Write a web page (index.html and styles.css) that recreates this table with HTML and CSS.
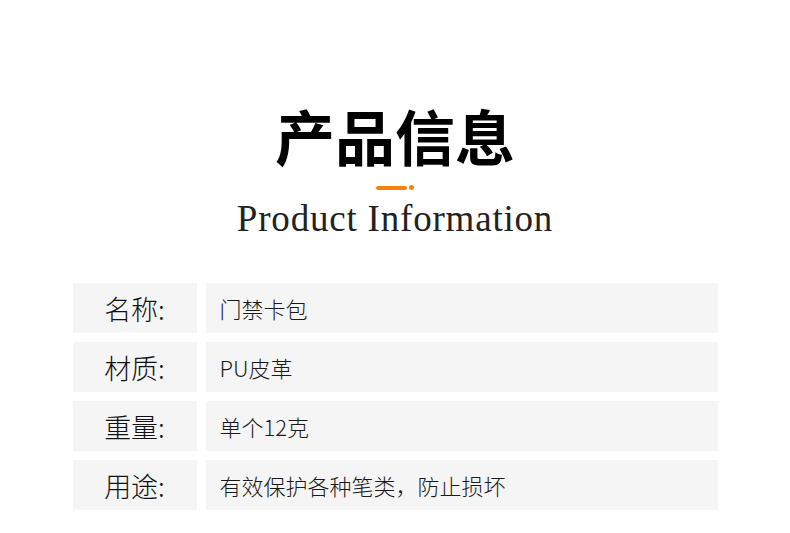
FILE: index.html
```html
<!DOCTYPE html>
<html lang="zh-CN">
<head>
    <meta charset="UTF-8">
    <meta name="viewport" content="width=device-width, initial-scale=1.0">
    <title>产品信息</title>
    <link rel="stylesheet" href="styles.css">
</head>
<body>
    <div class="header">
        <h1 class="title">产品信息</h1>
        <div class="accent">
            <span class="accent-line"></span>
            <span class="accent-dot"></span>
        </div>
        <p class="subtitle">Product Information</p>
    </div>

    <div class="info-table">
        <div class="info-row">
            <div class="info-label">名称:</div>
            <div class="info-value">门禁卡包</div>
        </div>
        <div class="info-row">
            <div class="info-label">材质:</div>
            <div class="info-value">PU皮革</div>
        </div>
        <div class="info-row">
            <div class="info-label">重量:</div>
            <div class="info-value">单个12克</div>
        </div>
        <div class="info-row">
            <div class="info-label">用途:</div>
            <div class="info-value">有效保护各种笔类，防止损坏</div>
        </div>
    </div>
</body>
</html>
```

FILE: styles.css
```css
* {
    padding: 0;
    margin: 0;
    box-sizing: border-box;
}
body {
    background-color: #fff;
    font-family: "Noto Sans CJK SC", "Noto Sans", sans-serif;
    color: #222;
}
.header {
    display: flex;
    flex-direction: column;
    align-items: center;
    padding-top: 105px;
}
.title {
    font-size: 60px;
    line-height: 60px;
    font-weight: 700;
    color: #000;
}
.accent {
    display: flex;
    align-items: center;
    gap: 2px;
    margin-top: 20px;
    height: 5px;
}
.accent-line {
    display: block;
    width: 31px;
    height: 4px;
    border-radius: 2px;
    background-color: #f6820e;
}
.accent-dot {
    display: block;
    width: 5px;
    height: 5px;
    border-radius: 50%;
    background-color: #f6820e;
}
.subtitle {
    margin-top: 7px;
    font-family: "Liberation Serif", serif;
    font-size: 37px;
    line-height: 44px;
    letter-spacing: 0.8px;
    color: #222;
}
.info-table {
    display: flex;
    flex-direction: column;
    gap: 9px;
    width: 645px;
    margin: 42px auto 0;
}
.info-row {
    display: flex;
    gap: 9px;
    height: 50px;
}
.info-label {
    width: 124px;
    display: flex;
    align-items: center;
    justify-content: center;
    background-color: #f5f5f5;
    font-size: 27px;
    font-weight: 300;
    color: #111;
}
.info-value {
    flex: 1;
    display: flex;
    align-items: center;
    padding-left: 14px;
    background-color: #f5f5f5;
    font-size: 22px;
    font-weight: 300;
    color: #1a1a1a;
}
```
